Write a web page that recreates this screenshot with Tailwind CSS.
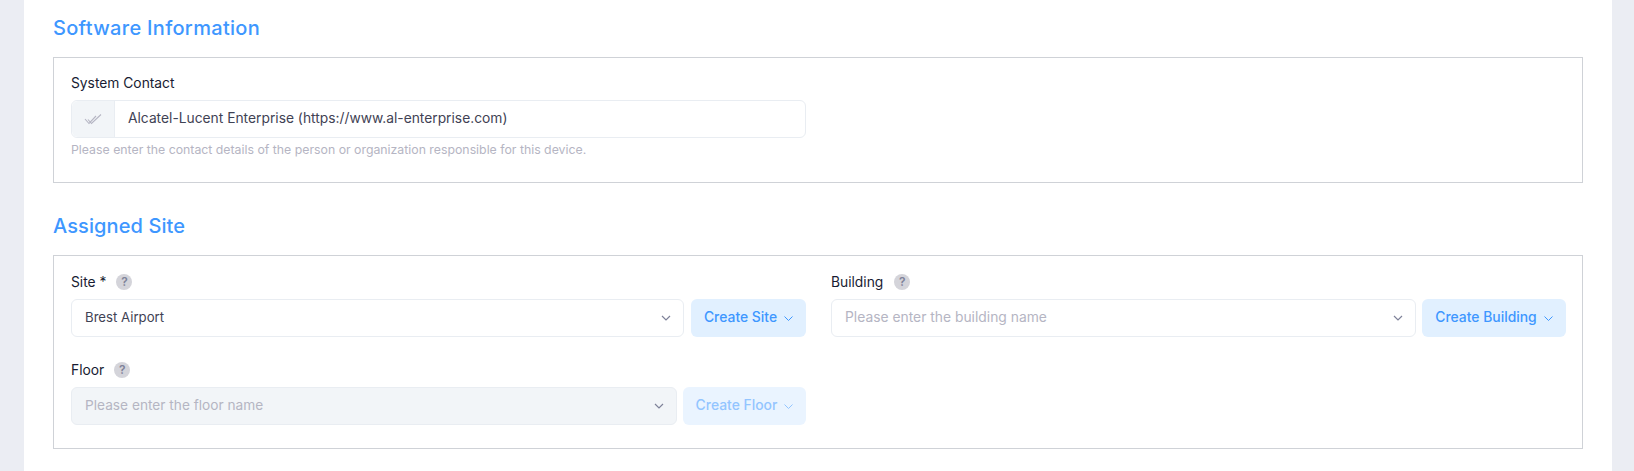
<!DOCTYPE html>
<html lang="en">
<head>
  <meta charset="UTF-8" />
  <title>Device Settings</title>
  <script src="https://cdn.jsdelivr.net/npm/@tailwindcss/browser@4"></script>
</head>
<body class="bg-[#ebedf3] font-['Inter',sans-serif] overflow-hidden">
  <div class="ml-6 mr-[22px] h-[471px] bg-white px-[29px] pt-3.5">
    <h2 class="h-7 mb-[15px] text-[20px] leading-7 font-medium tracking-[0.3px] text-[#3e97ff]">Software Information</h2>
    <!-- Software info -->
    <section class="h-[126px] border border-[#cfd2d7] pl-[17px] pr-4 pt-[17px]">
      <label class="block h-4 mb-[9px] text-[13.8px] leading-4 text-[#181c32]">System Contact</label>
      <div class="flex w-[735px] h-[38px] rounded-md border border-[#e9edf2] text-[13.8px] text-[#3f4254]">
        <span class="flex w-[43px] shrink-0 items-center justify-center rounded-l-md border-r border-[#e9edf2] bg-[#f2f5f8]">
          <svg width="18" height="12" viewBox="0 0 18 12" fill="none" stroke="#b5b5c3" stroke-width="1.1"><path d="M1 6l4 4.5L12 3M4 6.5l3.5 4L17 1.5" /></svg>
        </span>
        <span class="flex items-center pl-[13px] pb-px">Alcatel-Lucent Enterprise (https://www.al-enterprise.com)</span>
      </div>
      <p class="mt-[3px] h-[18px] text-[12.3px] leading-[18px] text-[#b5b5c3]">Please enter the contact details of the person or organization responsible for this device.</p>
    </section>

    <h2 class="h-7 mt-[29px] mb-[15px] text-[20px] leading-7 font-medium tracking-[0.1px] text-[#3e97ff]">Assigned Site</h2>
    <!-- Assigned site -->
    <section class="h-[194px] border border-[#cfd2d7] pl-[17px] pr-4 pt-[18px]">
      <div class="grid grid-cols-2 gap-x-[25px] gap-y-[25px]">
        <div>
          <div class="flex h-4 mb-[9px] items-center text-[13.8px] text-[#181c32]">
            <span>Site *</span>
            <span class="ml-[10px] flex size-4 items-center justify-center rounded-full bg-[#d4d4da] text-[12px] font-semibold text-[#7e8299]">?</span>
          </div>
          <div class="flex gap-[7px]">
            <div class="flex h-[38px] flex-1 items-center justify-between rounded-md border border-[#e9edf2] pl-[13px] pr-[12px] text-[13.2px] text-[#3f4254]">
              <span class="pb-px">Brest Airport</span>
              <svg width="10" height="6" viewBox="0 0 10 6" fill="none" stroke="#7e8299" stroke-width="1.2"><path d="M1 1l4 4 4-4" /></svg>
            </div>
            <div class="flex h-[38px] w-[115px] items-center justify-center gap-[7px] rounded-md bg-[#e1f0ff] text-[13.9px] font-medium text-[#3e97ff]">
              <span class="pb-px">Create Site</span>
              <svg width="9" height="5" viewBox="0 0 9 5" fill="none" stroke="#3e97ff" stroke-width="1"><path d="M.5.5l4 4 4-4" /></svg>
            </div>
          </div>
        </div>
        <div>
          <div class="flex h-4 mb-[9px] items-center text-[13.8px] text-[#181c32]">
            <span>Building</span>
            <span class="ml-[11px] flex size-4 items-center justify-center rounded-full bg-[#d4d4da] text-[12px] font-semibold text-[#7e8299]">?</span>
          </div>
          <div class="flex gap-[6px]">
            <div class="flex h-[38px] flex-1 items-center justify-between rounded-md border border-[#e9edf2] pl-[13px] pr-[12px] text-[13.85px] text-[#b5b5c3]">
              <span class="pb-px">Please enter the building name</span>
              <svg width="10" height="6" viewBox="0 0 10 6" fill="none" stroke="#7e8299" stroke-width="1.2"><path d="M1 1l4 4 4-4" /></svg>
            </div>
            <div class="flex h-[38px] w-[144px] items-center justify-center gap-[7px] rounded-md bg-[#e1f0ff] text-[13.9px] font-medium text-[#3e97ff]">
              <span class="pb-px">Create Building</span>
              <svg width="9" height="5" viewBox="0 0 9 5" fill="none" stroke="#3e97ff" stroke-width="1"><path d="M.5.5l4 4 4-4" /></svg>
            </div>
          </div>
        </div>
        <div>
          <div class="flex h-4 mb-[9px] items-center text-[13.8px] text-[#181c32]">
            <span>Floor</span>
            <span class="ml-[10px] flex size-4 items-center justify-center rounded-full bg-[#d4d4da] text-[12px] font-semibold text-[#7e8299]">?</span>
          </div>
          <div class="flex gap-[6px]">
            <div class="flex h-[38px] flex-1 items-center justify-between rounded-md border border-[#e9edf2] bg-[#f2f5f8] pl-[13px] pr-[12px] text-[13.7px] text-[#b5b5c3]">
              <span class="pb-px">Please enter the floor name</span>
              <svg width="10" height="6" viewBox="0 0 10 6" fill="none" stroke="#7e8299" stroke-width="1.2"><path d="M1 1l4 4 4-4" /></svg>
            </div>
            <div class="flex h-[38px] w-[123px] items-center justify-center gap-[7px] rounded-md bg-[#eaf4ff] text-[13.9px] font-medium text-[#93c5ff]">
              <span class="pb-px">Create Floor</span>
              <svg width="9" height="5" viewBox="0 0 9 5" fill="none" stroke="#93c5ff" stroke-width="1"><path d="M.5.5l4 4 4-4" /></svg>
            </div>
          </div>
        </div>
      </div>
    </section>
  </div>
</body>
</html>
